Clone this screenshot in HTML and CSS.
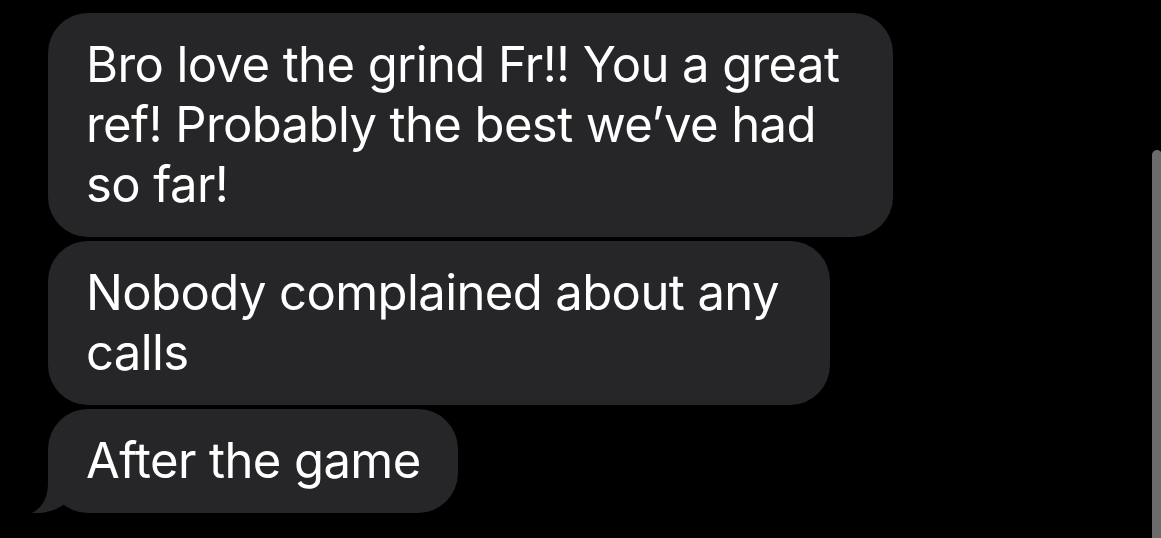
FILE: index.html
```html
<!DOCTYPE html>
<html>
<head>
<meta charset="utf-8">
<link rel="stylesheet" href="styles.css">
</head>
<body>
<div class="thread">
  <div class="bubble b1"><span class="text">Bro love the grind Fr!! You a great<br>ref! Probably the best we’ve had<br>so far!</span></div>
  <div class="bubble b2"><span class="text">Nobody complained about any<br>calls</span></div>
  <div class="bubble b3">
    <svg class="tail" width="50" height="45" viewBox="0 0 50 45"><path d="M16,0 L16,15 C16,30 10,40 0,45 C13,46 26,42 35,34 C40,39 45,42 50,44 L50,0 Z" fill="#262628"/></svg>
    <span class="text">After the game</span>
  </div>
</div>
<div class="scrollbar"></div>
</body>
</html>
```
FILE: styles.css
```css
html, body {
  margin: 0;
  padding: 0;
  background: #000;
  height: 100%;
  overflow: hidden;
}
.thread {
  display: flex;
  flex-direction: column;
  align-items: flex-start;
  gap: 4px;
  padding: 13px 0 0 48px;
}
.bubble {
  position: relative;
  box-sizing: border-box;
  background: #262628;
  color: #fff;
  font-family: Inter, "Noto Sans", sans-serif;
  font-size: 49px;
  line-height: 60px;
  letter-spacing: -0.6px;
  white-space: nowrap;
  padding: 22px 38px;
  border-radius: 40px;
}
.text {
  position: relative;
}
.b1 { width: 845px; }
.b2 { width: 782px; }
.b3 { width: 410px; }
.tail {
  position: absolute;
  left: -16px;
  bottom: 0;
  display: block;
}
.scrollbar {
  position: fixed;
  left: 1152px;
  top: 150px;
  width: 10px;
  height: 400px;
  background: #6b6b6b;
  border-radius: 5px 5px 0 0;
}
```
